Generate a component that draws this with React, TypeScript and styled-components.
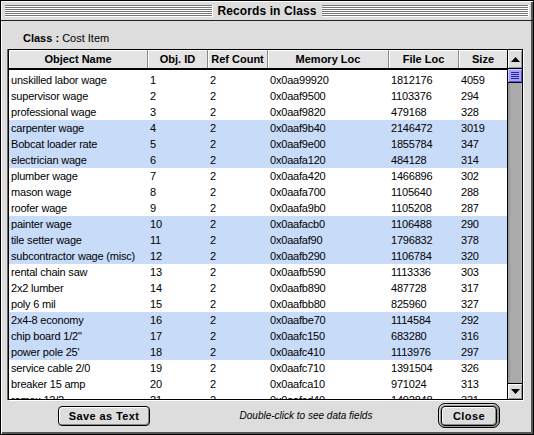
import React from "react";
import styled, { createGlobalStyle } from "styled-components";

interface RecordRow {
  name: string;
  id: number;
  refs: number;
  mem: string;
  file: string;
  size: string;
}

const records: RecordRow[] = [
  { name: "unskilled labor wage", id: 1, refs: 2, mem: "0x0aa99920", file: "1812176", size: "4059" },
  { name: "supervisor wage", id: 2, refs: 2, mem: "0x0aaf9500", file: "1103376", size: "294" },
  { name: "professional wage", id: 3, refs: 2, mem: "0x0aaf9820", file: "479168", size: "328" },
  { name: "carpenter wage", id: 4, refs: 2, mem: "0x0aaf9b40", file: "2146472", size: "3019" },
  { name: "Bobcat loader rate", id: 5, refs: 2, mem: "0x0aaf9e00", file: "1855784", size: "347" },
  { name: "electrician wage", id: 6, refs: 2, mem: "0x0aafa120", file: "484128", size: "314" },
  { name: "plumber wage", id: 7, refs: 2, mem: "0x0aafa420", file: "1466896", size: "302" },
  { name: "mason wage", id: 8, refs: 2, mem: "0x0aafa700", file: "1105640", size: "288" },
  { name: "roofer wage", id: 9, refs: 2, mem: "0x0aafa9b0", file: "1105208", size: "287" },
  { name: "painter wage", id: 10, refs: 2, mem: "0x0aafacb0", file: "1106488", size: "290" },
  { name: "tile setter wage", id: 11, refs: 2, mem: "0x0aafaf90", file: "1796832", size: "378" },
  { name: "subcontractor wage (misc)", id: 12, refs: 2, mem: "0x0aafb290", file: "1106784", size: "320" },
  { name: "rental chain saw", id: 13, refs: 2, mem: "0x0aafb590", file: "1113336", size: "303" },
  { name: "2x2 lumber", id: 14, refs: 2, mem: "0x0aafb890", file: "487728", size: "317" },
  { name: "poly 6 mil", id: 15, refs: 2, mem: "0x0aafbb80", file: "825960", size: "327" },
  { name: "2x4-8 economy", id: 16, refs: 2, mem: "0x0aafbe70", file: "1114584", size: "292" },
  { name: "chip board 1/2\"", id: 17, refs: 2, mem: "0x0aafc150", file: "683280", size: "316" },
  { name: "power pole 25'", id: 18, refs: 2, mem: "0x0aafc410", file: "1113976", size: "297" },
  { name: "service cable 2/0", id: 19, refs: 2, mem: "0x0aafc710", file: "1391504", size: "326" },
  { name: "breaker 15 amp", id: 20, refs: 2, mem: "0x0aafca10", file: "971024", size: "313" },
  { name: "romex 12/2", id: 21, refs: 2, mem: "0x0aafcd40", file: "1492848", size: "331" },
];

const columns = ["Object Name", "Obj. ID", "Ref Count", "Memory Loc", "File Loc", "Size"];

const GlobalStyle = createGlobalStyle`
  html, body {
    margin: 0;
    padding: 0;
    background: #dddddd;
  }
  body {
    font-family: "Liberation Sans", Arial, sans-serif;
  }
`;

const Window = styled.div`
  box-sizing: border-box;
  width: 534px;
  height: 435px;
  display: flex;
  flex-direction: column;
  background: #dddddd;
  border: 1px solid #000;
  box-shadow: inset 1px 1px 0 #ffffff, inset -2px -2px 0 #555555;
`;

const TitleBar = styled.div`
  height: 19px;
  display: flex;
  align-items: center;
  gap: 5px;
  padding: 0 4px 0 4px;
  border-bottom: 1px solid #222;
  box-shadow: inset 1px 1px 0 #fff;
`;

const Stripes = styled.div`
  flex: 1;
  height: 12px;
  background: repeating-linear-gradient(
    to bottom,
    #777777 0 1px,
    #ffffff 1px 2px
  );
  border-right: 1px solid #fff;
`;

const Title = styled.div`
  font-weight: bold;
  font-size: 12px;
  letter-spacing: 0.1px;
  color: #000;
  white-space: nowrap;
`;

const Body = styled.div`
  flex: 1;
  display: flex;
  flex-direction: column;
  padding: 0 10px 0 7px;
  box-shadow: inset 1px 0 0 #fff;
`;

const ClassRow = styled.div`
  box-sizing: border-box;
  height: 28px;
  padding: 11px 0 0 15px;
  font-size: 11px;
  line-height: 12px;
`;

const Bold = styled.span`
  font-weight: bold;
`;

const Frame = styled.div`
  height: 351px;
  box-sizing: border-box;
  display: flex;
  border: 1px solid #000;
  box-shadow: -1px 0 0 #666, 1px 1px 0 #fff;
  background: #fff;
  overflow: hidden;
`;

const List = styled.div`
  width: 498px;
  display: flex;
  flex-direction: column;
  overflow: hidden;
`;

const gridCols = "139px 60px 60px 121px 70px 48px";

const HeaderRow = styled.div`
  display: grid;
  grid-template-columns: ${gridCols};
  height: 18px;
  border-bottom: 2px solid #000;
  background: #e4e4e4;
  flex-shrink: 0;
`;

const HeaderCell = styled.div`
  display: flex;
  align-items: center;
  justify-content: center;
  font-weight: bold;
  font-size: 11px;
  color: #000;
  border-right: 1px solid #8a8a8a;
  box-shadow: inset 1px 1px 0 #ffffff;
  &:last-child {
    border-right: none;
  }
`;

const Rows = styled.div`
  padding-top: 2px;
  display: flex;
  flex-direction: column;
`;

const Row = styled.div<{ $selected: boolean }>`
  display: grid;
  grid-template-columns: ${gridCols};
  height: 16px;
  flex-shrink: 0;
  background: ${({ $selected }) => ($selected ? "#c8dcfa" : "#ffffff")};
`;

const Cell = styled.div`
  padding-left: 2px;
  font-size: 11px;
  letter-spacing: -0.2px;
  line-height: 16px;
  white-space: nowrap;
  overflow: hidden;
  color: #000;
`;

const ScrollBar = styled.div`
  width: 14px;
  display: flex;
  flex-direction: column;
  border-left: 1px solid #000;
  background: #aaaaaa;
`;

const ArrowBox = styled.div<{ $up?: boolean }>`
  height: ${({ $up }) => ($up ? "18px" : "15px")};
  display: flex;
  align-items: center;
  justify-content: center;
  background: #dddddd;
  box-shadow: inset 1px 1px 0 #fff, inset -1px -1px 0 #999;
  ${({ $up }) => ($up ? "border-bottom: 1px solid #000;" : "border-top: 1px solid #000;")}
`;

const Thumb = styled.div`
  height: 14px;
  box-sizing: border-box;
  border-bottom: 1px solid #000;
  background: #a3a3ff;
  box-shadow: inset 1px 1px 0 #ccccff, inset -1px -1px 0 #5555cc;
  display: flex;
  align-items: center;
  justify-content: center;
`;

const Grip = styled.div`
  width: 8px;
  height: 7px;
  background: repeating-linear-gradient(
    to bottom,
    #2a2a99 0 1px,
    transparent 1px 2px
  );
`;

const Track = styled.div`
  flex: 1;
  background: #aaaaaa;
  box-shadow: inset 2px 0 0 #999, inset -1px 0 0 #bbb;
`;

const Footer = styled.div`
  flex: 1;
  display: grid;
  grid-template-columns: 92px 1fr 62px;
  align-items: center;
  padding: 0 23px 3px 50px;
`;

const PushButton = styled.button`
  box-sizing: border-box;
  height: 20px;
  width: 100%;
  padding: 0;
  border: 1px solid #000;
  border-radius: 4px;
  background: #dddddd;
  box-shadow: inset 1px 1px 0 #fff, inset -1px -1px 0 #888;
  font-family: "Liberation Sans", Arial, sans-serif;
  font-weight: bold;
  font-size: 11px;
  letter-spacing: 0.4px;
  color: #000;
`;

const DefaultRing = styled.div`
  box-sizing: border-box;
  height: 25px;
  padding: 2px;
  border: 1px solid #000;
  border-radius: 7px;
  background: #999;
  box-shadow: inset 1px 1px 0 #ddd;
`;

const Hint = styled.div`
  text-align: center;
  padding-left: 24px;
  font-style: italic;
  font-size: 10px;
  color: #000;
`;

const UpArrow = () => (
  <svg width="9" height="5" viewBox="0 0 9 5">
    <polygon points="4.5,0 9,5 0,5" fill="#000" />
  </svg>
);

const DownArrow = () => (
  <svg width="9" height="5" viewBox="0 0 9 5">
    <polygon points="0,0 9,0 4.5,5" fill="#000" />
  </svg>
);

export default function App() {
  return (
    <>
      <GlobalStyle />
      <Window>
        <TitleBar>
          <Stripes />
          <Title>Records in Class</Title>
          <Stripes />
        </TitleBar>
        <Body>
          <ClassRow>
            <Bold>Class :</Bold> Cost Item
          </ClassRow>
          <Frame>
            <List>
              <HeaderRow>
                {columns.map((c) => (
                  <HeaderCell key={c}>{c}</HeaderCell>
                ))}
              </HeaderRow>
              <Rows>
                {records.map((r, i) => (
                  <Row key={r.id} $selected={Math.floor(i / 3) % 2 === 1}>
                    <Cell>{r.name}</Cell>
                    <Cell>{r.id}</Cell>
                    <Cell>{r.refs}</Cell>
                    <Cell>{r.mem}</Cell>
                    <Cell>{r.file}</Cell>
                    <Cell>{r.size}</Cell>
                  </Row>
                ))}
              </Rows>
            </List>
            <ScrollBar>
              <ArrowBox $up>
                <UpArrow />
              </ArrowBox>
              <Thumb>
                <Grip />
              </Thumb>
              <Track />
              <ArrowBox>
                <DownArrow />
              </ArrowBox>
            </ScrollBar>
          </Frame>
          <Footer>
            <PushButton>Save as Text</PushButton>
            <Hint>Double-click to see data fields</Hint>
            <DefaultRing>
              <PushButton>Close</PushButton>
            </DefaultRing>
          </Footer>
        </Body>
      </Window>
    </>
  );
}
